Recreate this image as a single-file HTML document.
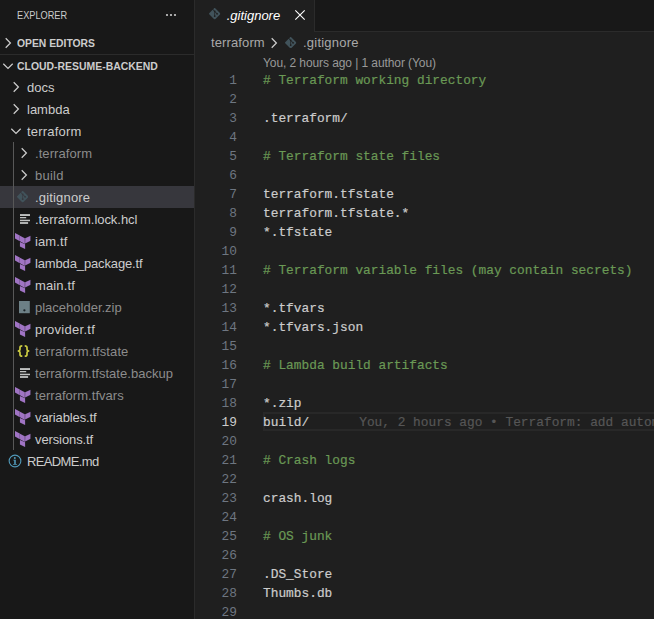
<!DOCTYPE html>
<html lang="en">
<head>
<meta charset="utf-8">
<title>.gitignore - cloud-resume-backend</title>
<style>
*{box-sizing:border-box;margin:0;padding:0}
html,body{width:654px;height:619px;overflow:hidden;background:#1f1f1f}
body{position:relative;font-family:"Liberation Sans",sans-serif;color:#cccccc}
#side{position:absolute;left:0;top:0;width:195px;height:619px;background:#181818;border-right:1px solid #2b2b2b}
#editor{position:absolute;left:195px;top:0;width:459px;height:619px;background:#1f1f1f}
.abs{position:absolute;white-space:nowrap}
.hdr{font-size:11px;line-height:22px;color:#cccccc}
.bold{font-weight:bold}
.row{position:absolute;left:0;width:194px;height:22px;line-height:22px;font-size:13px;white-space:nowrap;color:#cccccc}
.row .lbl{position:absolute;top:1px}
.row.dim .lbl{color:#8c8c8c}
.row svg{position:absolute}
.sel{background:#37373d}
.guide{position:absolute;left:13px;top:142px;width:1px;height:308px;background:#585858}
#tabs{position:absolute;left:0;top:0;width:459px;height:32px;background:#181818;border-bottom:1px solid #2b2b2b}
#tab{position:absolute;left:0;top:0;width:120px;height:32px;background:#1f1f1f;border-right:1px solid #2b2b2b}
.code{position:absolute;left:68px;font-family:"Liberation Mono",monospace;font-size:12.83px;line-height:19px;height:19px;white-space:pre;color:#cccccc;-webkit-text-stroke:0.2px}
.cm{color:#6a9955}
.ln{position:absolute;left:0;width:42px;text-align:right;font-family:"Liberation Mono",monospace;font-size:12.83px;line-height:19px;height:19px;color:#6e7681}
.ln.cur{color:#cccccc}
</style>
</head>
<body>
<svg width="0" height="0" style="position:absolute">
<defs>
<symbol id="i-git" viewBox="0 0 24 24"><path fill="#41535b" d="M23.546 10.93L13.067.452c-.604-.603-1.582-.603-2.188 0L8.708 2.627l2.76 2.76c.645-.215 1.379-.07 1.889.441.516.515.658 1.258.438 1.9l2.658 2.66c.645-.223 1.387-.078 1.9.435.721.72.721 1.884 0 2.604-.719.719-1.881.719-2.6 0-.539-.541-.674-1.337-.404-1.996L12.86 8.955v6.525c.176.086.342.203.488.348.713.721.713 1.883 0 2.6-.719.721-1.889.721-2.609 0-.719-.719-.719-1.879 0-2.598.182-.18.387-.316.605-.406V8.835c-.217-.091-.424-.222-.6-.401-.545-.545-.676-1.342-.396-2.009L7.636 3.7.45 10.881c-.6.605-.6 1.584 0 2.189l10.48 10.477c.604.604 1.582.604 2.186 0l10.43-10.43c.605-.603.605-1.582 0-2.187"/></symbol>
<symbol id="i-tf" viewBox="0 0 16 17"><g fill="#a074c4"><path d="M0 0 L4.9 2.6 V8.3 L0 5.7Z"/><path d="M5.1 2.75 L10 5.4 V11.1 L5.1 8.45Z"/><path d="M10.35 5.45 L15.9 2.9 V8 L10.35 10.75Z"/><path d="M5.0 9.1 L10.3 11.5 V16.3 L5.0 13.8Z"/></g></symbol>
<symbol id="i-lines" viewBox="0 0 12 12"><g fill="#c0c2c1"><rect x="0" y="0.1" width="10" height="1.9"/><rect x="0" y="3" width="6.2" height="1.3"/><rect x="0" y="5.7" width="10" height="1.5"/><rect x="0" y="8.1" width="8.1" height="1.8"/></g></symbol>
<symbol id="i-zip" viewBox="0 0 12 13"><rect x="0" y="0" width="10.8" height="12.2" fill="#6d8086"/><circle cx="5.4" cy="9.3" r="1.15" fill="#1b2428"/></symbol>
<symbol id="i-json" viewBox="0 0 14 14"><g fill="none" stroke="#cbcb41" stroke-width="1.7"><path d="M5.3 1.8 C3.2 1.8 3 2.4 3 3.6 V5.3 C3 6.5 2.4 7 0.7 7 C2.4 7 3 7.5 3 8.7 V10.4 C3 11.6 3.2 12.2 5.3 12.2"/><path d="M7.7 1.8 C9.8 1.8 10 2.4 10 3.6 V5.3 C10 6.5 10.6 7 12.3 7 C10.6 7 10 7.5 10 8.7 V10.4 C10 11.6 9.8 12.2 7.7 12.2"/></g></symbol>
<symbol id="i-info" viewBox="0 0 14 14"><circle cx="7" cy="7" r="5.85" fill="none" stroke="#519aba" stroke-width="1.1"/><g fill="#519aba"><circle cx="6.8" cy="4" r="1"/><path d="M5.3 5.8 H7.8 V10 H8.9 V10.8 H5.1 V10 H6.2 V6.6 H5.3Z"/></g></symbol>
<symbol id="i-chr" viewBox="0 0 16 16"><path d="M5.7 3.3 L10.4 8 L5.7 12.7" fill="none" stroke="#cccccc" stroke-width="1.25"/></symbol>
<symbol id="i-chd" viewBox="0 0 16 16"><path d="M3.3 5.7 L8 10.4 L12.7 5.7" fill="none" stroke="#cccccc" stroke-width="1.25"/></symbol>
</defs></svg>

<div id="side">
  <div class="abs hdr" style="left:17px;top:4px;transform-origin:0 50%;transform:scaleX(0.835)">EXPLORER</div>
  <svg class="abs" style="left:165px;top:12.7px" width="12" height="4" viewBox="0 0 12 4"><circle cx="2" cy="2" r="1.1" fill="#ccc"/><circle cx="6" cy="2" r="1.1" fill="#ccc"/><circle cx="10" cy="2" r="1.1" fill="#ccc"/></svg>
  <svg class="abs" style="left:0px;top:35px" width="16" height="16"><use href="#i-chr" width="16" height="16"/></svg>
  <div class="abs hdr bold" style="left:17px;top:32px;transform-origin:0 50%;transform:scaleX(0.94)">OPEN EDITORS</div>
  <div class="abs" style="left:0;top:54px;width:194px;height:1px;background:#2b2b2b"></div>
  <svg class="abs" style="left:0px;top:58px" width="16" height="16"><use href="#i-chd" width="16" height="16"/></svg>
  <div class="abs hdr bold" style="left:17px;top:55px;transform-origin:0 50%;transform:scaleX(0.948)">CLOUD-RESUME-BACKEND</div>
  <div class="row" style="top:76px"><svg style="left:7.9px;top:3px" width="16" height="16"><use href="#i-chr" width="16" height="16"/></svg><span class="lbl" style="left:27px">docs</span></div>
  <div class="row" style="top:98px"><svg style="left:7.9px;top:3px" width="16" height="16"><use href="#i-chr" width="16" height="16"/></svg><span class="lbl" style="left:27px">lambda</span></div>
  <div class="row" style="top:120px"><svg style="left:7.9px;top:3px" width="16" height="16"><use href="#i-chd" width="16" height="16"/></svg><span class="lbl" style="left:27px;letter-spacing:0.2px">terraform</span></div>
  <div class="row dim" style="top:142px"><svg style="left:15.9px;top:3px" width="16" height="16"><use href="#i-chr" width="16" height="16"/></svg><span class="lbl" style="left:35px;letter-spacing:0.07px">.terraform</span></div>
  <div class="row dim" style="top:164px"><svg style="left:15.9px;top:3px" width="16" height="16"><use href="#i-chr" width="16" height="16"/></svg><span class="lbl" style="left:35px;letter-spacing:0.25px">build</span></div>
  <div class="row sel" style="top:186px"><svg style="left:16.8px;top:5.3px" width="11.4" height="11.4"><use href="#i-git" width="11.4" height="11.4"/></svg><span class="lbl" style="left:35px;letter-spacing:0.17px">.gitignore</span></div>
  <div class="row" style="top:208px"><svg style="left:20px;top:6px" width="12" height="12"><use href="#i-lines" width="12" height="12"/></svg><span class="lbl" style="left:35px;letter-spacing:-0.05px">.terraform.lock.hcl</span></div>
  <div class="row" style="top:230px"><svg style="left:15.25px;top:2.9px" width="15.7" height="16.7"><use href="#i-tf" width="15.7" height="16.7"/></svg><span class="lbl" style="left:35px;letter-spacing:0.1px">iam.tf</span></div>
  <div class="row" style="top:252px"><svg style="left:15.25px;top:2.9px" width="15.7" height="16.7"><use href="#i-tf" width="15.7" height="16.7"/></svg><span class="lbl" style="left:35px;letter-spacing:-0.14px">lambda_package.tf</span></div>
  <div class="row" style="top:274px"><svg style="left:15.25px;top:2.9px" width="15.7" height="16.7"><use href="#i-tf" width="15.7" height="16.7"/></svg><span class="lbl" style="left:35px;letter-spacing:0.14px">main.tf</span></div>
  <div class="row dim" style="top:296px"><svg style="left:19.2px;top:4.8px" width="12" height="13"><use href="#i-zip" width="12" height="13"/></svg><span class="lbl" style="left:35px">placeholder.zip</span></div>
  <div class="row" style="top:318px"><svg style="left:15.25px;top:2.9px" width="15.7" height="16.7"><use href="#i-tf" width="15.7" height="16.7"/></svg><span class="lbl" style="left:35px;letter-spacing:0.27px">provider.tf</span></div>
  <div class="row dim" style="top:340px"><svg style="left:16.95px;top:3.9px" width="14" height="14"><use href="#i-json" width="14" height="14"/></svg><span class="lbl" style="left:35px;letter-spacing:0.1px">terraform.tfstate</span></div>
  <div class="row dim" style="top:362px"><svg style="left:20px;top:6px" width="12" height="12"><use href="#i-lines" width="12" height="12"/></svg><span class="lbl" style="left:35px;letter-spacing:0.03px">terraform.tfstate.backup</span></div>
  <div class="row dim" style="top:384px"><svg style="left:15.25px;top:2.9px" width="15.7" height="16.7"><use href="#i-tf" width="15.7" height="16.7"/></svg><span class="lbl" style="left:35px;letter-spacing:0.04px">terraform.tfvars</span></div>
  <div class="row" style="top:406px"><svg style="left:15.25px;top:2.9px" width="15.7" height="16.7"><use href="#i-tf" width="15.7" height="16.7"/></svg><span class="lbl" style="left:35px;letter-spacing:-0.11px">variables.tf</span></div>
  <div class="row" style="top:428px"><svg style="left:15.25px;top:2.9px" width="15.7" height="16.7"><use href="#i-tf" width="15.7" height="16.7"/></svg><span class="lbl" style="left:35px;letter-spacing:-0.11px">versions.tf</span></div>
  <div class="row" style="top:450px"><svg style="left:7.85px;top:3.95px" width="14" height="14"><use href="#i-info" width="14" height="14"/></svg><span class="lbl" style="left:27px;letter-spacing:-0.63px">README.md</span></div>
  <div class="guide"></div>
</div>

<div id="editor">
  <div id="tabs">
    <div id="tab">
      <svg class="abs" style="left:14.45px;top:8.3px" width="11.4" height="11.4"><use href="#i-git" width="11.4" height="11.4"/></svg>
      <div class="abs" style="left:31.7px;top:0;line-height:31px;font-size:13px;font-style:italic;color:#fff">.gitignore</div>
      <svg class="abs" style="left:99px;top:9px" width="12" height="12" viewBox="0 0 12 12"><path d="M1.3 1.3 L10.7 10.7 M10.7 1.3 L1.3 10.7" stroke="#fff" stroke-width="1.1" fill="none"/></svg>
    </div>
  </div>
  <div class="abs" style="left:16px;top:32px;line-height:22px;font-size:13px;color:#a9a9a9;letter-spacing:0.12px">terraform</div>
  <svg class="abs" style="left:70.5px;top:35px" width="16" height="16"><use href="#i-chr" width="16" height="16"/></svg>
  <svg class="abs" style="left:90.3px;top:37px" width="11.4" height="11.4"><use href="#i-git" width="11.4" height="11.4"/></svg>
  <div class="abs" style="left:108px;top:32px;line-height:22px;font-size:13px;color:#a9a9a9;letter-spacing:0.22px">.gitignore</div>
  <div class="abs" style="left:68px;top:54px;line-height:19px;font-size:12px;color:#999999;letter-spacing:-0.085px">You, 2 hours ago | 1 author (You)</div>

  <div class="abs" style="left:68px;top:412px;width:400px;height:19px;border:2px solid #282828"></div>

  <div class="ln" style="top:71px">1</div><div class="code cm" style="top:71px"># Terraform working directory</div>
  <div class="ln" style="top:90px">2</div>
  <div class="ln" style="top:109px">3</div><div class="code" style="top:109px">.terraform/</div>
  <div class="ln" style="top:128px">4</div>
  <div class="ln" style="top:147px">5</div><div class="code cm" style="top:147px"># Terraform state files</div>
  <div class="ln" style="top:166px">6</div>
  <div class="ln" style="top:185px">7</div><div class="code" style="top:185px">terraform.tfstate</div>
  <div class="ln" style="top:204px">8</div><div class="code" style="top:204px">terraform.tfstate.*</div>
  <div class="ln" style="top:223px">9</div><div class="code" style="top:223px">*.tfstate</div>
  <div class="ln" style="top:242px">10</div>
  <div class="ln" style="top:261px">11</div><div class="code cm" style="top:261px"># Terraform variable files (may contain secrets)</div>
  <div class="ln" style="top:280px">12</div>
  <div class="ln" style="top:299px">13</div><div class="code" style="top:299px">*.tfvars</div>
  <div class="ln" style="top:318px">14</div><div class="code" style="top:318px">*.tfvars.json</div>
  <div class="ln" style="top:337px">15</div>
  <div class="ln" style="top:356px">16</div><div class="code cm" style="top:356px"># Lambda build artifacts</div>
  <div class="ln" style="top:375px">17</div>
  <div class="ln" style="top:394px">18</div><div class="code" style="top:394px">*.zip</div>
  <div class="ln cur" style="top:413px">19</div><div class="code" style="top:413px">build/<span style="color:#565656;margin-left:50px">You, 2 hours ago • Terraform: add automated Lambda packaging</span></div>
  <div class="ln" style="top:432px">20</div>
  <div class="ln" style="top:451px">21</div><div class="code cm" style="top:451px"># Crash logs</div>
  <div class="ln" style="top:470px">22</div>
  <div class="ln" style="top:489px">23</div><div class="code" style="top:489px">crash.log</div>
  <div class="ln" style="top:508px">24</div>
  <div class="ln" style="top:527px">25</div><div class="code cm" style="top:527px"># OS junk</div>
  <div class="ln" style="top:546px">26</div>
  <div class="ln" style="top:565px">27</div><div class="code" style="top:565px">.DS_Store</div>
  <div class="ln" style="top:584px">28</div><div class="code" style="top:584px">Thumbs.db</div>
  <div class="ln" style="top:603px">29</div>
</div>
</body>
</html>
